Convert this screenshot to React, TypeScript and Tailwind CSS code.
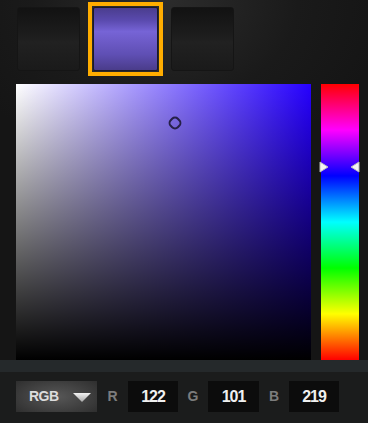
import React from "react";

export default function App() {
  const hueGradient =
    "linear-gradient(to bottom, #ff0000 0%, #ff00ff 16.7%, #0000ff 33.3%, #00ffff 50%, #00ff00 66.7%, #ffff00 83.3%, #ff0000 100%)";
  return (
    <div
      className="w-[368px] h-[423px] overflow-hidden flex flex-col"
      style={{
        fontFamily: '"Liberation Sans", Arial, sans-serif',
        background:
          "radial-gradient(ellipse 60% 40% at 45% 0%, #2c2c2c 0%, #1a1a1a 60%, #151515 100%)",
      }}
    >
      {/* swatches */}
      <div className="flex items-start pl-[17px] pt-[2px] gap-[8px]">
        <div className="mt-[5px] w-[63px] h-[64px] rounded-[3px] border border-[#151515] bg-[linear-gradient(to_bottom,#121212_0%,#1d1d1d_45%,#212121_55%,#1a1a1a_100%)]" />
        <div className="w-[75px] h-[74px] border-[4px] border-[#ffad00] bg-[#2a2a2a] p-[1px]">
          <div className="w-full h-full rounded-[2px] border border-[#1c1a26] bg-[linear-gradient(to_bottom,#4a3d8e_0%,#5a4aae_20%,#7664d6_38%,#6c5ac6_55%,#5f4fb4_75%,#4a3c8a_100%)]" />
        </div>
        <div className="mt-[5px] w-[63px] h-[64px] rounded-[3px] border border-[#151515] bg-[linear-gradient(to_bottom,#121212_0%,#1d1d1d_45%,#212121_55%,#1a1a1a_100%)]" />
      </div>

      {/* picker */}
      <div className="flex pl-[16px] mt-[8px] gap-[10px]">
        <div
          className="relative w-[295px] h-[276px]"
          style={{
            background:
              "linear-gradient(to bottom, rgba(0,0,0,0), #000), linear-gradient(to right, #fff, #2600ff)",
          }}
        >
          <div className="absolute left-[153px] top-[33px] w-[12px] h-[12px] rotate-45 rounded-[5px] border-[2px] border-[#262048]" />
        </div>
        <div className="relative w-[38px] h-[276px]" style={{ background: hueGradient }}>
          <svg className="absolute left-[-2px] top-[77px]" width="10" height="12" viewBox="0 0 10 12">
            <path d="M1 1 L9 6 L1 11 Z" fill="#f4f4f4" stroke="#bbb" strokeWidth="1" strokeLinejoin="round" />
          </svg>
          <svg className="absolute right-[-1px] top-[77px]" width="10" height="12" viewBox="0 0 10 12">
            <path d="M9 1 L1 6 L9 11 Z" fill="#f4f4f4" stroke="#bbb" strokeWidth="1" strokeLinejoin="round" />
          </svg>
        </div>
      </div>

      <div className="h-[12px] bg-[#25292b]" />

      {/* bottom bar */}
      <div className="flex-1 bg-[#1b1c1c] flex items-start pt-[9px] pl-[16px]">
        <div
          className="w-[81px] h-[31px] flex items-center justify-between pl-[13px] pr-[6px]"
          style={{
            background:
              "radial-gradient(ellipse 70% 80% at 50% 50%, #575757 0%, #424242 50%, #2c2c2c 100%)",
          }}
        >
          <span className="text-[14px] font-bold text-[#dcdcdc] tracking-[-0.5px]">RGB</span>
          <svg width="18" height="10" viewBox="0 0 18 10">
            <defs>
              <linearGradient id="ag" x1="0" y1="0" x2="0" y2="1">
                <stop offset="0" stopColor="#f2f2f2" />
                <stop offset="1" stopColor="#a8a8a8" />
              </linearGradient>
            </defs>
            <path d="M0 1 L18 1 L9 10 Z" fill="url(#ag)" />
          </svg>
        </div>
        <div className="w-[31px] h-[31px] flex items-center justify-center text-[14px] font-bold text-[#7c7c7c]">R</div>
        <div className="w-[50px] h-[31px] bg-[#0c0c0c] flex items-center justify-center text-[16px] font-bold tracking-[-1px] text-[#f0f0f0]">122</div>
        <div className="w-[30px] h-[31px] flex items-center justify-center text-[14px] font-bold text-[#7c7c7c]">G</div>
        <div className="w-[51px] h-[31px] bg-[#0c0c0c] flex items-center justify-center text-[16px] font-bold tracking-[-1px] text-[#f0f0f0]">101</div>
        <div className="w-[30px] h-[31px] flex items-center justify-center text-[14px] font-bold text-[#7c7c7c]">B</div>
        <div className="w-[50px] h-[31px] bg-[#0c0c0c] flex items-center justify-center text-[16px] font-bold tracking-[-1px] text-[#f0f0f0]">219</div>
      </div>
    </div>
  );
}
